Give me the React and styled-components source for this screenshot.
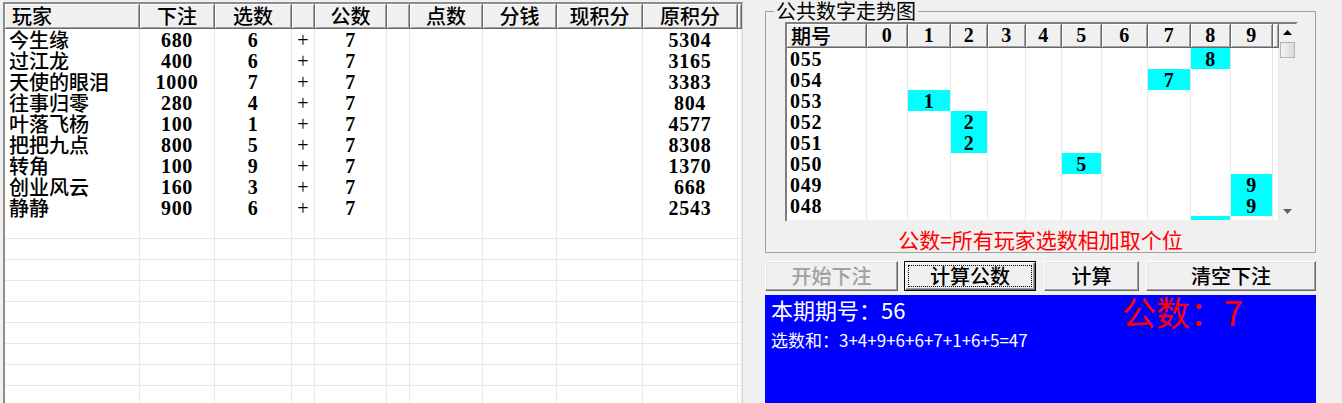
import React from 'react';
import styled, { createGlobalStyle } from 'styled-components';

const GlobalStyle = createGlobalStyle`
  html, body { margin: 0; padding: 0; background: #f0f0f0; overflow: hidden; }
  body { font-family: "Liberation Serif", "Noto Sans CJK SC", serif; }
  * { box-sizing: border-box; }
`;

const CJK = `"Noto Sans CJK SC", "Noto Sans", sans-serif`;
const SERIF = `"Liberation Serif", "Noto Sans CJK SC", serif`;

const Page = styled.div`
  display: flex;
  align-items: flex-start;
  gap: 22px;
  padding-left: 3px;
  width: 1342px;
  height: 403px;
  overflow: hidden;
`;

/* ---------- left player grid ---------- */
const LEFT_COLS = '135px 75px 77px 23px 72px 23px 73px 74px 86px 95px 1fr';

const PlayerGrid = styled.div`
  margin-top: 2px;
  width: 740px;
  height: 401px;
  overflow: hidden;
  background: #fff;
  border-style: solid;
  border-width: 2px 1px 0 2px;
  border-color: #8c8c8c #d8d8d8 transparent #8c8c8c;
`;

const GridRow = styled.div`
  display: grid;
  grid-template-columns: ${p => p.$cols};
  height: ${p => p.$h}px;
`;

const HeadCell = styled.div`
  background: #f0f0f0;
  border-right: 1px solid #696969;
  border-bottom: 1px solid #696969;
  box-shadow: inset 1px 1px #fff, inset -1px -1px #a0a0a0;
  font: 500 20px/23px ${CJK};
  color: #000;
  text-align: ${p => (p.$left ? 'left' : 'center')};
  padding-left: ${p => (p.$left ? p.$pad || 7 : 0)}px;
  white-space: nowrap;
`;

const NumHead = styled(HeadCell)`
  font: bold 20px/23px ${SERIF};
  letter-spacing: 0.7px;
`;

const Cell = styled.div`
  border-right: 1px solid #e8e8e8;
  border-bottom: 1px solid #e8e8e8;
  background: ${p => (p.$hit ? '#00ffff' : '#fff')};
  font: ${p => (p.$text ? `500 20px/20px ${CJK}` : p.$thin ? `20px/20px ${SERIF}` : `bold 20px/20px ${SERIF}`)};
  letter-spacing: ${p => (p.$text || p.$thin ? 0 : 0.7)}px;
  color: #000;
  text-align: ${p => (p.$left ? 'left' : 'center')};
  padding-left: ${p => (p.$left ? p.$pad || 4 : 0)}px;
  padding-top: 1px;
  white-space: nowrap;
`;

/* ---------- right side ---------- */
const RightPanel = styled.div`
  width: 551px;
  height: 403px;
  display: flex;
  flex-direction: column;
`;

const GroupBox = styled.fieldset`
  margin: 0;
  padding: 0 0 1px 0;
  width: 551px;
  border: 1px solid #a0a0a0;
  min-inline-size: 0;
`;

const GroupTitle = styled.legend`
  margin-left: 8px;
  padding: 0 2px;
  font: 20px/22px ${CJK};
  color: #000;
`;

const TrendFrame = styled.div`
  display: flex;
  width: 513px;
  height: 200px;
  margin-left: 19px;
  border-style: solid;
  border-width: 2px;
  border-color: #808080 #f0f0f0 #f0f0f0 #808080;
  background: #fff;
  overflow: hidden;
`;

const TrendTable = styled.div`
  flex: 0 0 492px;
  display: flex;
  flex-direction: column;
`;

const ScrollBar = styled.div`
  flex: 0 0 17px;
  background: #f0f0f0;
  display: flex;
  flex-direction: column;
  align-items: center;
`;

const ScrollArrow = styled.div`
  height: 17px;
  width: 17px;
  display: flex;
  align-items: center;
  justify-content: center;
`;

const ScrollThumb = styled.div`
  margin-top: 1px;
  width: 15px;
  height: 16px;
  border: 1px solid #b4b4b4;
  background: linear-gradient(to right, #f4f4f4, #dadada);
`;

const ScrollSpacer = styled.div`
  flex: 1;
`;

const Caption = styled.div`
  margin-top: 5px;
  text-align: center;
  font: 21px/24px ${CJK};
  color: #ff0000;
`;

const ButtonRow = styled.div`
  margin-top: 8px;
  display: flex;
`;

const Button = styled.button`
  width: ${p => p.$w}px;
  height: 30px;
  margin: 0 ${p => p.$mr || 0}px 0 0;
  padding: 0;
  background: #f0f0f0;
  border: 1px solid;
  border-color: ${p => (p.$default ? '#000' : '#fff #696969 #696969 #fff')};
  box-shadow: ${p =>
    p.$default
      ? 'inset 1px 1px #fff, inset -1px -1px #696969, inset -2px -2px #a0a0a0'
      : 'inset -1px -1px #a0a0a0, inset 1px 1px #e3e3e3'};
  outline: ${p => (p.$default ? '1px dotted #000' : 'none')};
  outline-offset: -5px;
  font: 500 20px/26px ${CJK};
  color: ${p => (p.disabled ? '#a0a0a0' : '#000')};
`;

const InfoPanel = styled.div`
  margin-top: 4px;
  flex: 1;
  background: #0000ff;
  padding: 1px 0 0 6px;
`;

const InfoTop = styled.div`
  display: flex;
  align-items: flex-start;
  height: 30px;
`;

const Period = styled.div`
  width: 351px;
  font: 22px/26px ${CJK};
  color: #fff;
`;

const BigResult = styled.div`
  margin-top: 1px;
  font: 34px/30px ${CJK};
  color: #ff0000;
`;

const SumLine = styled.div`
  margin-top: 3px;
  font: 17px/22px ${CJK};
  color: #fff;
`;

/* ---------- data ---------- */
const players = [
  ['今生缘', 680, 6, 5304],
  ['过江龙', 400, 6, 3165],
  ['天使的眼泪', 1000, 7, 3383],
  ['往事归零', 280, 4, 804],
  ['叶落飞杨', 100, 1, 4577],
  ['把把九点', 800, 5, 8308],
  ['转角', 100, 9, 1370],
  ['创业风云', 160, 3, 668],
  ['静静', 900, 6, 2543],
];

const leftHeads = ['玩家', '下注', '选数', '', '公数', '', '点数', '分钱', '现积分', '原积分', ''];

const TREND_COLS = '80px 41px 43px 37px 38px 36px 40px 46px 43px 40px 42px 6px';
const trend = [
  ['055', 8],
  ['054', 7],
  ['053', 1],
  ['052', 2],
  ['051', 2],
  ['050', 5],
  ['049', 9],
  ['048', 9],
  ['047', 8],
];

const UpArrow = ({ color = '#000' }) => (
  <svg width="9" height="5" viewBox="0 0 9 5">
    <path d="M4.5 0 L9 5 L0 5 Z" fill={color} />
  </svg>
);
const DownArrow = ({ color = '#606060' }) => (
  <svg width="9" height="5" viewBox="0 0 9 5">
    <path d="M0 0 L9 0 L4.5 5 Z" fill={color} />
  </svg>
);

export default function App() {
  const emptyRows = Array.from({ length: 9 });
  return (
    <>
      <GlobalStyle />
      <Page>
        <PlayerGrid>
          <GridRow $cols={LEFT_COLS} $h={25}>
            {leftHeads.map((h, i) => (
              <HeadCell key={i} $left={i === 0}>
                {h}
              </HeadCell>
            ))}
          </GridRow>
          {players.map(([name, bet, pick, score]) => (
            <GridRow key={name} $cols={LEFT_COLS} $h={21}>
              <Cell $text $left>{name}</Cell>
              <Cell>{bet}</Cell>
              <Cell>{pick}</Cell>
              <Cell $thin>+</Cell>
              <Cell>7</Cell>
              <Cell />
              <Cell />
              <Cell />
              <Cell />
              <Cell>{score}</Cell>
              <Cell />
            </GridRow>
          ))}
          {emptyRows.map((_, r) => (
            <GridRow key={'e' + r} $cols={LEFT_COLS} $h={21}>
              {leftHeads.map((_, i) => (
                <Cell key={i} />
              ))}
            </GridRow>
          ))}
        </PlayerGrid>

        <RightPanel>
          <GroupBox>
            <GroupTitle>公共数字走势图</GroupTitle>
            <TrendFrame>
              <TrendTable>
                <GridRow $cols={TREND_COLS} $h={25}>
                  <HeadCell $left $pad={4}>期号</HeadCell>
                  {Array.from({ length: 10 }).map((_, d) => (
                    <NumHead key={d}>{d}</NumHead>
                  ))}
                  <HeadCell />
                </GridRow>
                {trend.map(([no, hit]) => (
                  <GridRow key={no} $cols={TREND_COLS} $h={21}>
                    <Cell $left $pad={3}>{no}</Cell>
                    {Array.from({ length: 10 }).map((_, d) => (
                      <Cell key={d} $hit={d === hit}>
                        {d === hit ? d : ''}
                      </Cell>
                    ))}
                    <Cell />
                  </GridRow>
                ))}
              </TrendTable>
              <ScrollBar>
                <ScrollArrow>
                  <UpArrow />
                </ScrollArrow>
                <ScrollThumb />
                <ScrollSpacer />
                <ScrollArrow>
                  <DownArrow />
                </ScrollArrow>
              </ScrollBar>
            </TrendFrame>
            <Caption>公数=所有玩家选数相加取个位</Caption>
          </GroupBox>

          <ButtonRow>
            <Button $w={133} $mr={6} disabled>开始下注</Button>
            <Button $w={132} $mr={8} $default>计算公数</Button>
            <Button $w={95} $mr={7}>计算</Button>
            <Button $w={170}>清空下注</Button>
          </ButtonRow>

          <InfoPanel>
            <InfoTop>
              <Period>本期期号：56</Period>
              <BigResult>公数：7</BigResult>
            </InfoTop>
            <SumLine>选数和：3+4+9+6+6+7+1+6+5=47</SumLine>
          </InfoPanel>
        </RightPanel>
      </Page>
    </>
  );
}
